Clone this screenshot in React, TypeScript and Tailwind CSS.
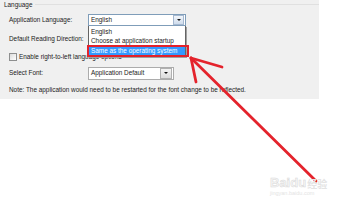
import React from "react";

const font = { fontFamily: '"Liberation Sans", Arial, sans-serif' };

export default function App() {
  return (
    <div className="relative w-[340px] h-[202px] bg-white overflow-hidden text-[6.4px] text-[#222]" style={font}>
      <div className="relative w-[319px] h-[99px] bg-[#f0f0f0] flex flex-col">
        <div className="h-[10px] flex items-start pl-[4px] gap-[3px]">
          <span className="leading-[9px]">Language</span>
          <div className="flex-1 h-px bg-[#e0e0e0] mt-[4px]" />
        </div>
        <div className="mt-[3px] h-[14px] flex items-center pl-[9px]">
          <span className="w-[79px]">Application Language:</span>
          <div className="w-[98px] h-[12px] bg-white border border-[#7f9db9] flex items-center">
            <span className="flex-1 pl-[2px]">English</span>
            <div className="w-[11px] h-[10px] mr-px bg-gradient-to-b from-[#f2f6fb] to-[#cfdcec] border border-[#a5b8d0] flex items-center justify-center">
              <div className="w-0 h-0 border-l-[2.5px] border-r-[2.5px] border-t-[2.5px] border-l-transparent border-r-transparent border-t-[#111]" />
            </div>
          </div>
        </div>
        <div className="mt-[5px] h-[14px] flex items-center pl-[9px]">
          <span>Default Reading Direction:</span>
        </div>
        <div className="mt-[4px] h-[14px] flex items-center pl-[9px] gap-[2px]">
          <div className="w-[8px] h-[8px] bg-gradient-to-br from-[#dcdcdc] to-white border border-[#8e8f8f]" />
          <span>Enable right-to-left language options</span>
        </div>
        <div className="mt-[2px] h-[14px] flex items-center pl-[9px]">
          <span className="w-[79px]">Select Font:</span>
          <div className="w-[86px] h-[13px] bg-white border border-[#acacac] flex items-center">
            <span className="flex-1 pl-[2px]">Application Default</span>
            <div className="w-[12px] h-[11px] mr-px bg-gradient-to-b from-[#f4f4f4] to-[#dcdcdc] border border-[#b0b0b0] flex items-center justify-center">
              <div className="w-0 h-0 border-l-[2.5px] border-r-[2.5px] border-t-[2.5px] border-l-transparent border-r-transparent border-t-[#111]" />
            </div>
          </div>
        </div>
        <div className="mt-[3px] h-[14px] flex items-center pl-[9px]">
          <span>Note: The application would need to be restarted for the font change to be reflected.</span>
        </div>
      </div>

      {/* dropdown list */}
      <div className="absolute left-[88px] top-[26px] w-[98px] h-[31px] bg-white border border-[#646464] border-t-0 pt-px flex flex-col shadow-[1px_1px_0_#a0a0a0]">
        <div className="h-[9px] flex items-center pl-[2px]">English</div>
        <div className="h-[10px] flex items-center pl-[2px]">Choose at application startup</div>
        <div className="h-[10px] flex items-center pl-[2px] bg-[#3399ff] text-white">Same as the operating system</div>
      </div>
      <div className="absolute left-[87px] top-[45px] w-[102px] h-[12px] border-2 border-[#e3212b]" />

      {/* arrow */}
      <svg className="absolute left-0 top-0" width="340" height="202" viewBox="0 0 340 202">
        <g stroke="#e4232c" strokeWidth="2.8" strokeLinecap="round" fill="none">
          <line x1="191" y1="58" x2="316" y2="181" />
          <line x1="191" y1="58" x2="222" y2="67" />
          <line x1="191" y1="58" x2="196" y2="82" />
        </g>
      </svg>

      {/* watermark */}
      <div className="absolute left-[270px] top-[176px] flex flex-col items-start">
        <div className="flex items-end leading-none">
          <span className="text-[13px] font-bold" style={{ WebkitTextStroke: "0.5px #d8d8d8", color: "#f6f6f6" }}>Baidu</span>
          <span className="text-[10px] font-bold ml-px" style={{ fontFamily: '"Noto Sans CJK SC", sans-serif', color: "#e4e4e4" }}>经验</span>
        </div>
        <span className="text-[5.5px] leading-none mt-[2px] text-[#e4e4e4]">jingyan.baidu.com</span>
      </div>
    </div>
  );
}
